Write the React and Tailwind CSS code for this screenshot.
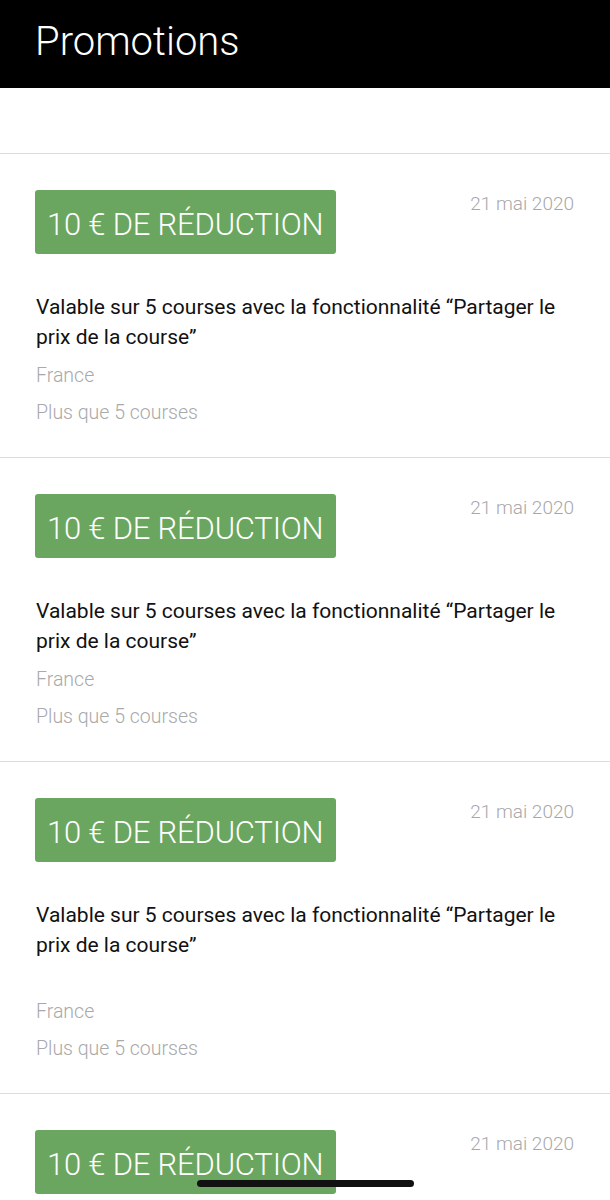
import React from "react";

function Badge() {
  return (
    <div className="flex items-start justify-between">
      <div className="h-[64px] w-[301px] rounded-[3px] bg-[#6ba660] flex items-center pl-[12px] pt-[5px] text-white text-[31px] font-light tracking-[-0.2px] leading-none whitespace-nowrap">
        10 € DE RÉDUCTION
      </div>
      <div className="pt-[2px] text-[19px] leading-[24px] font-light text-[#a8a8a8]">21 mai 2020</div>
    </div>
  );
}

function Card({ extraGap = false }) {
  return (
    <div className="border-b border-[#dcdcdc] pl-[35px] pr-[36px] pt-[36px] pb-[26px]">
      <Badge />
      <div className="mt-[38px] pl-px text-[21px] leading-[30px] text-[#111]">
        Valable sur 5 courses avec la fonctionnalité “Partager le prix de la course”
      </div>
      {extraGap && <div className="h-[28px]" />}
      <div className="pl-px text-[19.5px] leading-[36.5px] font-light text-[#a9a9a9] mt-[6px]">France</div>
      <div className="pl-px text-[19.5px] leading-[36.5px] font-light text-[#a9a9a9]">Plus que 5 courses</div>
    </div>
  );
}

export default function App() {
  return (
    <div className="relative h-[1200px] w-[610px] overflow-hidden bg-white" style={{ fontFamily: "Roboto, 'Noto Sans', sans-serif" }}>
      <div className="h-[88px] bg-black flex items-center pl-[35px] pb-[4px]">
        <span className="text-white text-[40px] font-light leading-none">Promotions</span>
      </div>
      <div className="h-[66px] border-b border-[#dcdcdc]" />
      <Card />
      <Card />
      <Card extraGap />
      <div className="pl-[35px] pr-[36px] pt-[36px]">
        <Badge />
      </div>
      <div className="absolute left-[197px] bottom-[13px] h-[7px] w-[217px] rounded-full bg-[#111]" />
    </div>
  );
}
